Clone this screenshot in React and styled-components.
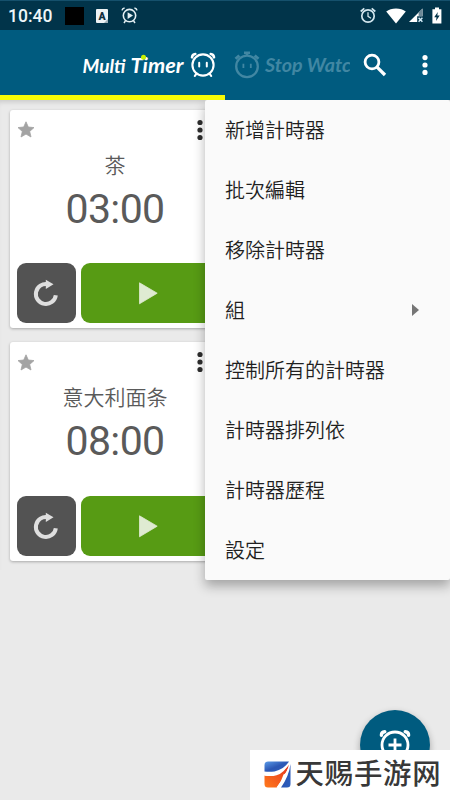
import React from 'react'
import styled, { createGlobalStyle } from 'styled-components'

const timers = [
  { name: '茶', time: '03:00' },
  { name: '意大利面条', time: '08:00' },
]

const menuItems = [
  { label: '新增計時器' },
  { label: '批次編輯' },
  { label: '移除計時器' },
  { label: '組', submenu: true },
  { label: '控制所有的計時器' },
  { label: '計時器排列依' },
  { label: '計時器歷程' },
  { label: '設定' },
]

const App = () => {
  return (
    <>
      <GlobalStyle />
      <Screen>
        <StatusBar />
        <Toolbar>
          <Tabs>
            <Tab $width={225}>
              <MultiTimerLogo />
            </Tab>
            <Tab $width={125}>
              <StopWatchLogo />
            </Tab>
          </Tabs>
          <IconButton>
            <SearchIcon />
          </IconButton>
          <IconButton>
            <Dots color="#fff" gap={7.4} />
          </IconButton>
        </Toolbar>
        <TabIndicator />

        <TimerList>
          {timers.map((timer) => (
            <TimerCard key={timer.name} {...timer} />
          ))}
        </TimerList>

        <Menu>
          {menuItems.map((item) => (
            <MenuItem key={item.label}>
              <MenuLabel>{item.label}</MenuLabel>
              {item.submenu && (
                <svg width="7" height="12" viewBox="0 0 7 12">
                  <path d="M0 0L7 6L0 12Z" fill="#757575" />
                </svg>
              )}
            </MenuItem>
          ))}
        </Menu>

        <AddButton>
          <AddTimerIcon />
        </AddButton>
        <Banner>
          <BannerLogo />
          <BannerText>天赐手游网</BannerText>
        </Banner>
      </Screen>
    </>
  )
}

const StatusBar = () => (
  <StatusRow>
    <StatusGroup>
      <Clock>10:40</Clock>
      <BlackBox />
      <svg width="12" height="14" viewBox="0 0 12 14">
        <rect width="12" height="14" rx="1" fill="#eef3f5" />
        <path d="M8 14L12 10V14Z" fill="#9fb0b8" />
        <text x="6" y="10.6" textAnchor="middle" fontFamily="Roboto, sans-serif" fontWeight="900" fontSize="10.5" fill="#12303f">A</text>
      </svg>
      <TimerNotification />
    </StatusGroup>
    <StatusGroup>
      <AlarmIcon />
      <WifiIcon />
      <SignalIcon />
      <BatteryIcon />
    </StatusGroup>
  </StatusRow>
)

const TimerNotification = () => (
  <NotificationSvg width="17" height="17" viewBox="0 0 17 17" fill="none" stroke="#e4eff3">
    <circle cx="8.5" cy="8.6" r="6.2" strokeWidth="1.6" />
    <path d="M1 3.4Q1.4 1.4 3.6 1M16 3.4Q15.6 1.4 13.4 1M4.4 13.8L3 16M12.6 13.8L14 16" strokeWidth="1.5" />
    <path d="M6.6 5.3L12 8.6L6.6 11.9Z" fill="#e4eff3" stroke="none" />
  </NotificationSvg>
)

const AlarmIcon = () => (
  <AlarmSvg width="16" height="17" viewBox="0 0 16 17" fill="none" stroke="#d3e6ee">
    <circle cx="8" cy="9" r="6.2" strokeWidth="1.7" />
    <path d="M0.7 4.5L4.3 1.4M15.3 4.5L11.7 1.4" strokeWidth="1.7" />
    <path d="M8 5.3V9.4L11 11.2" strokeWidth="1.3" />
  </AlarmSvg>
)

const WifiIcon = () => (
  <WifiSvg width="20" height="16" viewBox="0 0 20 16">
    <path d="M10 15.6L0.2 3.6Q4.2 0.4 10 0.4Q15.8 0.4 19.8 3.6Z" fill="#fff" />
  </WifiSvg>
)

const SignalIcon = () => (
  <SignalSvg width="15" height="15" viewBox="0 0 15 15">
    <path d="M0 14L13.6 0.5V8.2H8.2V14Z" fill="#fff" />
    <path d="M9.6 4.4L13.6 0.5V8.2H9.6Z" fill="#6d8997" />
    <path d="M9.6 9.8L13.4 13.8M13.4 9.8L9.6 13.8" stroke="#d4edf8" strokeWidth="1.5" />
  </SignalSvg>
)

const BatteryIcon = () => (
  <svg width="10" height="17" viewBox="0 0 10 17">
    <path d="M3 0.5H7V2.2H9.4V16.6H0.4V2.2H3Z" fill="#fff" />
    <path d="M5.8 5L2.2 10.3H4.5L4 14L7.7 8.6H5.3Z" fill="#03344a" />
  </svg>
)

const MultiTimerLogo = () => (
  <svg width="225" height="65" viewBox="0 -5 225 65">
    <g fontFamily="Lato, sans-serif" fontStyle="italic" fontWeight="700" fill="#fff">
      <text x="82.5" y="38.3" fontSize="19.8" textLength="43" lengthAdjust="spacingAndGlyphs">Multi</text>
      <text x="130.5" y="38.3" fontSize="21" textLength="53" lengthAdjust="spacingAndGlyphs">Timer</text>
    </g>
    <circle cx="143.5" cy="22.2" r="2.5" fill="#c8f000" />
    <g fill="none" stroke="#fff" strokeLinecap="round">
      <circle cx="203" cy="30" r="10.6" strokeWidth="2.1" />
      <path d="M192 22.3Q192.3 19.3 195.3 19M214 22.3Q213.7 19.3 210.7 19" strokeWidth="2.6" />
      <path d="M196.3 38.8L194.8 41M209.7 38.8L211.2 41" strokeWidth="2.1" />
      <path d="M199.2 27.8V31.4M206.8 27.8V31.4" strokeWidth="2" />
    </g>
  </svg>
)

const StopWatchLogo = () => (
  <svg width="125" height="65" viewBox="0 -5 125 65">
    <g fill="none" stroke="#4187a3">
      <circle cx="22" cy="31.4" r="10.8" strokeWidth="2.3" />
      <path d="M19 17.8H25M22 17.8V21" strokeWidth="2.6" />
      <path d="M10.5 23.8L14.3 20.5M33.5 23.8L29.7 20.5" strokeWidth="2.8" />
      <path d="M18.4 28.8V33M25.8 28.8V33" strokeWidth="1.8" />
    </g>
    <text x="40" y="37" fontFamily="Lato, sans-serif" fontStyle="italic" fontWeight="700" fontSize="19.8" fill="#4187a3" textLength="86" lengthAdjust="spacingAndGlyphs">Stop Watc</text>
  </svg>
)

const SearchIcon = () => (
  <svg width="24" height="24" viewBox="0 0 24 24" fill="none" stroke="#fff">
    <circle cx="9" cy="9" r="6.9" strokeWidth="2.8" />
    <path d="M13.8 13.8L22 22" strokeWidth="3.3" />
  </svg>
)

const Dots = ({ color, gap }) => (
  <svg width="6" height="22" viewBox="0 0 6 22" fill={color}>
    <circle cx="3" cy={11 - gap} r="2.6" />
    <circle cx="3" cy="11" r="2.6" />
    <circle cx="3" cy={11 + gap} r="2.6" />
  </svg>
)

const TimerCard = ({ name, time }) => (
  <Card>
    <CardHeader>
      <svg width="18" height="17" viewBox="0 0 18 17">
        <path d="M9 0.8L11.3 6L17 6.6L12.7 10.4L14 16L9 13.1L4 16L5.3 10.4L1 6.6L6.7 6Z" fill="#a3a3a3" stroke="#a3a3a3" strokeWidth="0.8" strokeLinejoin="round" />
      </svg>
      <Dots color="#2d2d2d" gap={7.5} />
    </CardHeader>
    <TimerName>{name}</TimerName>
    <TimerTime>{time}</TimerTime>
    <Controls>
      <ControlButton $background="#535353">
        <svg width="26" height="28" viewBox="0 0 26 28">
          <path d="M15 5.2A10 10 0 1 0 22.8 16.2" fill="none" stroke="#dfdfdf" strokeWidth="4" />
          <path d="M12.8 0.8L20.5 5.2L12.8 10Z" fill="#dfdfdf" />
        </svg>
      </ControlButton>
      <ControlButton $background="#579b14">
        <svg width="18" height="22" viewBox="0 0 18 22" overflow="visible">
          <path d="M1.5 0.8L19.2 11.2L1.5 21.8Z" fill="#dfebd2" stroke="#dfebd2" strokeWidth="0.8" strokeLinejoin="round" />
        </svg>
      </ControlButton>
    </Controls>
  </Card>
)

const AddTimerIcon = () => (
  <svg width="32" height="32" viewBox="0 0 32 32" fill="none" stroke="#fff">
    <circle cx="16" cy="16" r="13" strokeWidth="2.8" />
    <path d="M16 9.5V22.5M9.5 16H22.5" strokeWidth="2.8" />
    <path d="M2.4 6.2Q2.4 3 5.8 2.7M29.6 6.2Q29.6 3 26.2 2.7" strokeWidth="3.4" strokeLinecap="round" />
  </svg>
)

const BannerLogo = () => (
  <svg width="27" height="27" viewBox="0 0 27 27">
    <defs>
      <linearGradient id="blue" x1="0" y1="0" x2="1" y2="1">
        <stop offset="0" stopColor="#5b9be8" />
        <stop offset="0.5" stopColor="#2c57b4" />
        <stop offset="1" stopColor="#2d5fbd" />
      </linearGradient>
      <linearGradient id="orange" x1="0" y1="1" x2="1" y2="0">
        <stop offset="0" stopColor="#ff7a1c" />
        <stop offset="1" stopColor="#e5321d" />
      </linearGradient>
    </defs>
    <path d="M4 0.5H25Q20 8.5 10.5 10.4Q5 11.3 0.5 10.4V4Q0.5 0.5 4 0.5Z" fill="url(#blue)" />
    <path d="M26.5 3V23Q26.5 26.5 23 26.5H17Q25 15 26.5 3Z" fill="url(#blue)" />
    <path d="M0.5 14.6Q9 15.6 15.5 11.8Q21 8.6 25 4Q22.5 13 19.5 13.6Q17.5 20.5 13 26.5H4Q0.5 26.5 0.5 23Z" fill="url(#orange)" />
    <path d="M25.6 3.4Q23.8 16.5 14.2 26.5H12.4Q20.6 16.2 25.6 3.4Z" fill="#fff" />
    <path d="M0.5 11.4Q15 14.2 26 1.2Q20 12.4 12.5 14.2Q7 15.8 0.5 14.4Z" fill="#fff" />
  </svg>
)

const GlobalStyle = createGlobalStyle`
  * {
    box-sizing: border-box;
  }
  body {
    margin: 0;
    font-family: Roboto, "Noto Sans CJK TC", sans-serif;
  }
  svg {
    display: block;
    flex-shrink: 0;
  }
`;

const Screen = styled.div`
  position: relative;
  display: flex;
  flex-direction: column;
  width: 450px;
  height: 800px;
  overflow: hidden;
  background: #eaeaea;
`;

const StatusRow = styled.header`
  display: flex;
  justify-content: space-between;
  align-items: center;
  height: 30px;
  padding: 0 8px;
  background: #01344a;
  border-top: 1px solid #15506c;
`;

const StatusGroup = styled.div`
  display: flex;
  align-items: center;
`;

const Clock = styled.span`
  width: 57px;
  font-size: 17.5px;
  font-weight: 500;
  line-height: 28px;
  color: #eef6f8;
`;

const BlackBox = styled.span`
  width: 19px;
  height: 18px;
  margin-right: 12px;
  background: #000;
`;

const NotificationSvg = styled.svg`
  margin-left: 13px;
`;

const AlarmSvg = styled.svg`
  margin-right: 10px;
`;

const WifiSvg = styled.svg`
  margin-right: 3px;
`;

const SignalSvg = styled.svg`
  margin-right: 8px;
`;

const Toolbar = styled.div`
  display: flex;
  align-items: center;
  height: 65px;
  background: #005b7f;
`;

const Tabs = styled.div`
  display: flex;
`;

const Tab = styled.div`
  width: ${(props) => props.$width}px;
  overflow: hidden;
`;

const IconButton = styled.div`
  display: flex;
  justify-content: center;
  width: 50px;
  padding-top: 5px;
`;

const TabIndicator = styled.div`
  flex-shrink: 0;
  height: 5px;
  background: #005b7f;
  border-left: 225px solid #f8fb05;
`;

const TimerList = styled.main`
  display: flex;
  flex-direction: column;
  gap: 14px;
  padding: 9.5px 10px;
  box-shadow: inset 0 5px 5px -3px rgba(0, 0, 0, 0.14);
`;

const Card = styled.section`
  display: flex;
  flex-direction: column;
  width: 210px;
  height: 218.5px;
  padding: 8px 6.5px 5px;
  background: #fff;
  border-radius: 3px;
  box-shadow: 0 1px 3px rgba(0, 0, 0, 0.28);
`;

const CardHeader = styled.div`
  display: flex;
  align-items: center;
  justify-content: space-between;
  height: 24px;
  padding: 0 10.5px 0 0;
`;

const TimerName = styled.div`
  height: 34px;
  margin-top: 5px;
  font-family: "Noto Sans CJK SC", sans-serif;
  font-size: 21px;
  font-weight: 350;
  line-height: 34px;
  text-align: center;
  color: #5a5a5a;
`;

const TimerTime = styled.div`
  margin-top: 4px;
  font-size: 41px;
  letter-spacing: -0.6px;
  line-height: 48px;
  text-align: center;
  color: #5a5a5a;
`;

const Controls = styled.div`
  display: grid;
  grid-template-columns: 59.5px 1fr;
  gap: 5px;
  height: 60px;
  margin-top: auto;
`;

const ControlButton = styled.div`
  display: flex;
  align-items: center;
  justify-content: center;
  border-radius: 9px;
  background: ${(props) => props.$background};
`;

const Menu = styled.ul`
  position: absolute;
  top: 100px;
  left: 205px;
  width: 245px;
  height: 480px;
  margin: 0;
  padding: 0;
  list-style: none;
  background: #fafafa;
  border-radius: 2px;
  box-shadow: 0 6px 12px rgba(0, 0, 0, 0.3);
  clip-path: inset(0 0 -30px -30px);
`;

const MenuItem = styled.li`
  display: flex;
  align-items: center;
  justify-content: space-between;
  height: 60px;
  padding: 0 31px 0 20px;
`;

const MenuLabel = styled.span`
  padding-bottom: 2px;
  font-family: "Noto Sans CJK TC", sans-serif;
  font-size: 20px;
  font-weight: 350;
  color: #1f1f1f;
`;

const AddButton = styled.div`
  position: absolute;
  top: 710px;
  left: 360px;
  display: flex;
  align-items: center;
  justify-content: center;
  width: 70px;
  height: 70px;
  border-radius: 50%;
  background: #005b7f;
  box-shadow: 0 3px 7px rgba(0, 0, 0, 0.3);
`;

const Banner = styled.div`
  position: absolute;
  right: 0;
  bottom: 0;
  display: flex;
  align-items: center;
  width: 200px;
  height: 50px;
  padding: 0 0 2px 13.5px;
  background: #fff;
`;

const BannerText = styled.span`
  margin-left: 5px;
  padding-bottom: 5px;
  font-family: "Noto Sans CJK SC", sans-serif;
  font-size: 28.4px;
  font-weight: 500;
  letter-spacing: 0.8px;
  line-height: 44px;
  color: #383838;
  white-space: nowrap;
`;

export default App;
